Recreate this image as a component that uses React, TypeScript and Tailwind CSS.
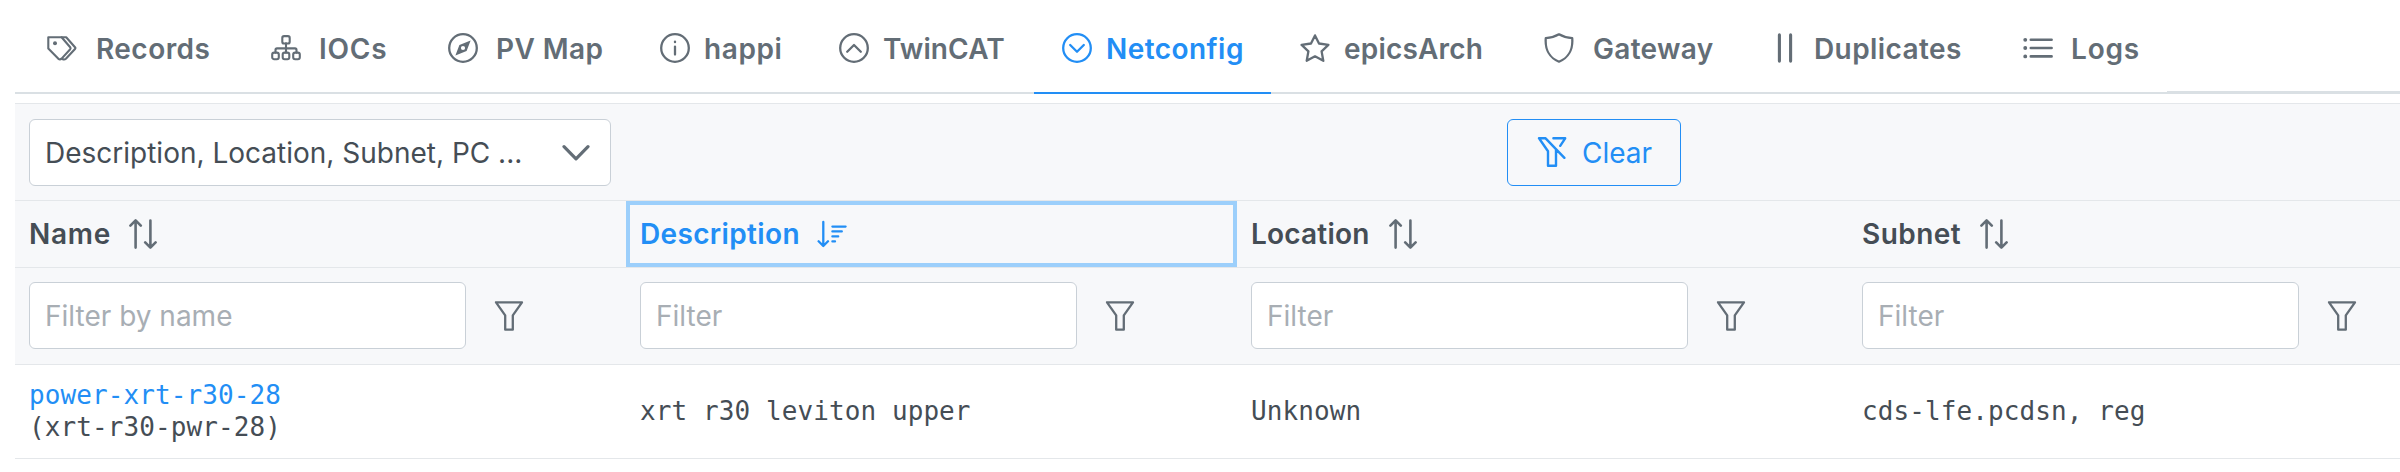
import React from "react";

type IconProps = { className?: string };

function Icon({ className = "", children }: IconProps & { children: React.ReactNode }) {
  return (
    <svg
      viewBox="0 0 30 30"
      fill="none"
      stroke="currentColor"
      strokeWidth={2.3}
      strokeLinecap="round"
      strokeLinejoin="round"
      className={`size-[30px] shrink-0 ${className}`}
    >
      {children}
    </svg>
  );
}

const Tags = () => (
  <Icon>
    <path d="M1.3 4.3H14.6L23.2 14.2Q24 15.2 23.2 16.2L14.6 25.6Q13 27 11.4 25.8L1.3 15.5Z" strokeWidth={2.1} />
    <path d="M14.6 4.3H19.2L28 14.2Q28.8 15.1 28 16L18.9 25.8Q17.4 27 15.4 26" strokeWidth={2.1} />
    <circle cx="8" cy="10.2" r="2" fill="currentColor" stroke="none" />
  </Icon>
);

const Sitemap = () => (
  <Icon>
    <g strokeWidth={2.1}>
      <rect x="11.3" y="3.1" width="7.4" height="7.4" rx="1.8" />
      <rect x="1.2" y="19.6" width="6.6" height="6.6" rx="2" />
      <rect x="11.7" y="19.6" width="6.6" height="6.6" rx="2" />
      <rect x="22.2" y="19.6" width="6.6" height="6.6" rx="2" />
      <path d="M15 10.4V19.6M4.5 19.6V16.9Q4.5 15.4 6 15.4H24Q25.5 15.4 25.5 16.9V19.6" />
    </g>
  </Icon>
);

const Compass = () => (
  <Icon>
    <circle cx="15" cy="15" r="13.8" />
    <path
      fillRule="evenodd"
      d="M22.6 7.4 18.6 17.9 7.4 22.6 11.4 12.1ZM15 12.9A2.1 2.1 0 1 0 15 17.1A2.1 2.1 0 1 0 15 12.9Z"
      fill="currentColor"
      stroke="none"
    />
  </Icon>
);

const Info = () => (
  <Icon>
    <circle cx="15" cy="15" r="13.8" />
    <path d="M15 13.6V21.6M15 8.6V9.2" />
  </Icon>
);

const ChevronCircleUp = () => (
  <Icon>
    <circle cx="15" cy="15" r="13.8" />
    <path d="M8.2 18.8 15 12 21.8 18.8" />
  </Icon>
);

const ChevronCircleDown = () => (
  <Icon>
    <circle cx="15" cy="15" r="13.8" />
    <path d="M8.2 12 15 18.8 21.8 12" />
  </Icon>
);

const Star = () => (
  <Icon>
    <path d="M15 2.4 19 10.5 28.4 11.9 21.6 18.4 23.3 27.8 15 23.3 6.7 27.8 8.4 18.4 1.6 11.9 11 10.5Z" />
  </Icon>
);

const Shield = () => (
  <Icon>
    <path d="M15 1.3Q20.5 4.6 28.2 5.2C29.2 16.5 24.2 25 15 28.7C5.8 25 .8 16.5 1.8 5.2Q9.5 4.6 15 1.3Z" />
  </Icon>
);

const Pause = () => (
  <Icon>
    <path d="M9.4 1.9V28.1M20.6 1.9V28.1" strokeWidth={3.1} />
  </Icon>
);

const List = () => (
  <Icon>
    <path d="M7.8 6.8H28.6M7.8 15H28.6M7.8 23.4H28.6" strokeWidth={2.6} />
    <path d="M2.2 6.8H2.3M2.2 15H2.3M2.2 23.4H2.3" strokeWidth={3.8} />
  </Icon>
);

const FilterIcon = () => (
  <Icon className="text-[#636d76]">
    <path d="M2 1.3H28L18.8 14.3V28.7H11.2V14.3Z" />
  </Icon>
);

const FilterSlash = () => (
  <Icon className="mb-px">
    <path
      d="M16.4 1.3H28.2L23.2 8.8M2 1.3H8.6L27.4 20.8M2 1.3 11 14.2V28.7H19V12.6"
      strokeWidth={2.4}
    />
  </Icon>
);

const SortBoth = () => (
  <Icon className="text-[#636d76]">
    <path d="M7.6 28.6V1.6M2.4 6.6 7.6 1.4 12.8 6.6M22.4 1.6V28.4M17.2 23.4 22.4 28.6 27.6 23.4" strokeWidth={2.6} />
  </Icon>
);

const SortDescending = () => (
  <Icon>
    <path d="M6.3 3V26.4M1.6 22.2 6.3 27 11 22.2M15.4 7.6H28.6M15.4 12.4H24.8M15.4 17.4H21.2M15.4 22.4H18" strokeWidth={2.3} />
  </Icon>
);

const tabs = [
  { label: "Records", icon: <Tags />, tab: "w-[224px] pl-[32px] gap-[19px]", text: "tracking-[0.45px]" },
  { label: "IOCs", icon: <Sitemap />, tab: "w-[177px] pl-[32px] gap-[18px]", text: "tracking-[0.8px]" },
  { label: "PV Map", icon: <Compass />, tab: "w-[216px] pl-[32px] gap-[18px]", text: "tracking-[0.4px]" },
  { label: "happi", icon: <Info />, tab: "w-[178px] pl-[28px] gap-[14px]", text: "tracking-[0.6px]" },
  { label: "TwinCAT", icon: <ChevronCircleUp />, tab: "w-[224px] pl-[29px] gap-[14px]", text: "tracking-[0.1px]" },
  { label: "Netconfig", icon: <ChevronCircleDown />, tab: "w-[237px] pl-[28px] gap-[14px]", text: "tracking-[0.45px]", active: true },
  { label: "epicsArch", icon: <Star />, tab: "w-[241px] pl-[29px] gap-[14px]", text: "tracking-[0.2px]" },
  { label: "Gateway", icon: <Shield />, tab: "w-[230px] pl-[32px] gap-[19px]", text: "tracking-[0.3px]" },
  { label: "Duplicates", icon: <Pause />, tab: "w-[249px] pl-[28px] gap-[14px]", text: "tracking-[0.4px]" },
  { label: "Logs", icon: <List />, tab: "w-[176px] pl-[32px] gap-[18px]", text: "tracking-[0.8px]" },
];

const columns = [
  { title: "Name", text: "tracking-[0.7px]", gap: "gap-[17px]", placeholder: "Filter by name" },
  { title: "Description", text: "tracking-[0.35px]", gap: "gap-[17px]", placeholder: "Filter", sorted: true },
  { title: "Location", text: "tracking-[0.2px]", gap: "gap-[18px]", placeholder: "Filter" },
  { title: "Subnet", text: "tracking-[0.45px]", gap: "gap-[18px]", placeholder: "Filter" },
];

export default function App() {
  return (
    <div className="h-[472px] w-[2400px] overflow-hidden bg-white pl-[15px] font-['Inter',sans-serif] text-[28px] leading-[34px] text-[#454d55]">
      <nav className="flex h-[95px] items-stretch">
        {tabs.map((t) => (
          <div
            key={t.label}
            className={`mb-px flex shrink-0 items-center border-b-2 pt-[3px] font-semibold whitespace-nowrap ${t.tab} ${
              t.active ? "border-[#228ef5] text-[#228ef5]" : "border-[#dae0e4] text-[#636d76]"
            }`}
          >
            {t.icon}
            <span className={`pt-[2px] ${t.text}`}>{t.label}</span>
          </div>
        ))}
        <div className="mb-px grow border-b-3 border-[#dae0e4]" />
      </nav>

      <main className="mt-[8px] w-[2444px] border-t border-[#e4e7ea] bg-[#f7f8fa]">
        <div className="flex h-[97px] items-start border-b border-[#e4e7ea] pt-[15px]">
          <div className="ml-[14px] flex h-[67px] w-[582px] items-center justify-between rounded-[6px] border border-[#c9d0d7] bg-white pr-[20px] pl-[15px]">
            <span>Description, Location, Subnet, PC ...</span>
            <svg
              viewBox="0 0 28 18"
              fill="none"
              stroke="currentColor"
              strokeWidth={3.2}
              strokeLinecap="round"
              strokeLinejoin="round"
              className="h-[18px] w-[28px] text-[#636d76]"
            >
              <path d="M2 2.6 14 14.8 26 2.6" />
            </svg>
          </div>
          <button className="ml-[896px] flex h-[67px] w-[174px] items-center gap-[15px] rounded-[6px] border border-[#228ef5] pl-[29px] text-[#228ef5]">
            <FilterSlash />
            <span>Clear</span>
          </button>
        </div>

        <div className="flex h-[67px] border-b border-[#e4e7ea]">
          {columns.map((c) => (
            <div
              key={c.title}
              className={`flex h-[66px] w-[611px] items-center pl-[14px] font-semibold ${c.gap} ${
                c.sorted ? "text-[#228ef5] outline-4 -outline-offset-4 outline-[#9ccffb]" : ""
              }`}
            >
              <span className={c.text}>{c.title}</span>
              {c.sorted ? <SortDescending /> : <SortBoth />}
            </div>
          ))}
        </div>

        <div className="flex h-[97px] border-b border-[#e4e7ea] pt-[14px]">
          {columns.map((c) => (
            <div key={c.title} className="flex h-[67px] w-[611px] items-center pl-[14px]">
              <input
                placeholder={c.placeholder}
                className="mr-[28px] h-[67px] w-[437px] rounded-[6px] border border-[#c9d0d7] bg-white pl-[15px] placeholder:text-[#a8aeb4]"
              />
              <FilterIcon />
            </div>
          ))}
        </div>

        <div className="flex h-[94px] items-center border-b border-[#e4e7ea] bg-white pb-[1px] font-['DejaVu_Sans_Mono',monospace] text-[26px] leading-[32px] tracking-[0.09px]">
          <div className="w-[611px] pl-[14px]">
            <div className="text-[#228ef5]">power-xrt-r30-28</div>
            <div>(xrt-r30-pwr-28)</div>
          </div>
          <div className="w-[611px] pl-[14px]">xrt r30 leviton upper</div>
          <div className="w-[611px] pl-[14px]">Unknown</div>
          <div className="w-[611px] pl-[14px]">cds-lfe.pcdsn, reg</div>
        </div>
      </main>
    </div>
  );
}
